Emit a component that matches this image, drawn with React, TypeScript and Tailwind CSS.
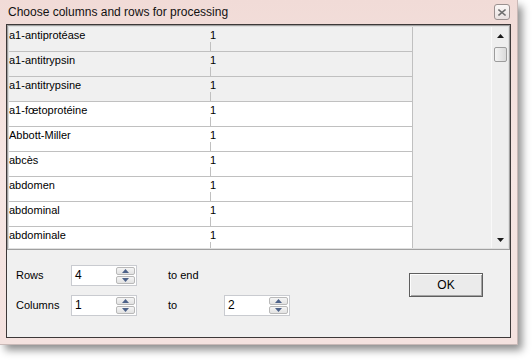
import React from "react";

const terms = [
  "a1-antiprotéase",
  "a1-antitrypsin",
  "a1-antitrypsine",
  "a1-fœtoprotéine",
  "Abbott-Miller",
  "abcès",
  "abdomen",
  "abdominal",
  "abdominale",
];

function Arrow({ up, color }: { up?: boolean; color: string }) {
  return (
    <svg width="7" height="4" viewBox="0 0 7 4">
      <path d={up ? "M0 4 L3.5 0 L7 4 Z" : "M0 0 L7 0 L3.5 4 Z"} fill={color} />
    </svg>
  );
}

function SpinButton({ up }: { up?: boolean }) {
  return (
    <div className="flex flex-1 items-center justify-center rounded-[2px] border border-[#b9b9b9] bg-gradient-to-b from-[#f5f5f5] to-[#e2e2e2]">
      <Arrow up={up} color="#4d6289" />
    </div>
  );
}

function SpinBox({ value }: { value: string }) {
  return (
    <div className="flex h-[21px] w-[66px] border border-[#c9cbd0] bg-white">
      <div className="flex-1 pl-[3px] text-[12px] leading-[19px] text-black">
        {value}
      </div>
      <div className="mr-px flex w-[19px] flex-col gap-px py-px">
        <SpinButton up />
        <SpinButton />
      </div>
    </div>
  );
}

function ScrollBar() {
  return (
    <div className="flex w-[17px] flex-col border-l border-[#f9f9f9] bg-[#eeeeee]">
      <div className="flex h-[17px] items-center justify-center">
        <Arrow up color="#1a1a1a" />
      </div>
      <div className="mx-auto mt-[3px] h-[15px] w-[13px] rounded-[2px] border border-[#9c9c9c] bg-gradient-to-r from-[#f4f4f4] to-[#dadada]" />
      <div className="flex-1" />
      <div className="flex h-[17px] items-center justify-center">
        <Arrow color="#1a1a1a" />
      </div>
    </div>
  );
}

function CloseButton() {
  return (
    <div className="flex h-[16px] w-[16px] items-center justify-center rounded-[3px] border border-[#9a908f] bg-gradient-to-b from-[#fbf7f6] to-[#e9e1e0]">
      <svg width="8" height="7" viewBox="0 0 8 7">
        <path
          d="M1 1 L7 6 M7 1 L1 6"
          stroke="#6e6e6e"
          strokeWidth="1.6"
          strokeLinecap="square"
        />
      </svg>
    </div>
  );
}

export default function App() {
  return (
    <div
      className="h-[361px] w-[532px] overflow-hidden bg-white"
      style={{ fontFamily: '"Liberation Sans", Arial, sans-serif' }}
    >
      <div className="flex h-[344px] w-[517px] flex-col bg-gradient-to-b from-[#f1dbd7] via-[#f6e6e3] to-[#f4e2df] px-[6px] pb-[6px] shadow-[5px_6px_8px_rgba(0,0,0,0.45)] ring-1 ring-[#c9b9b7]">
        <div className="flex h-[24px] items-center justify-between pl-[2px] pr-[1px]">
          <span className="text-[12px] text-[#111]">
            Choose columns and rows for processing
          </span>
          <CloseButton />
        </div>

        <div className="flex flex-1 flex-col border border-[#3d3838] bg-[#f0f0f0]">
          <div className="flex h-[225px] border border-[#a0a0a0]">
            <div className="flex flex-1 overflow-hidden border border-[#e0e0e0] border-l-[#dadada]">
              <div className="w-[404px] border-r border-[#c0c0c0]">
                {terms.map((term, i) => (
                  <div
                    key={term}
                    className={`flex h-[25px] border-b border-[#c0c0c0] text-[11px] text-black ${
                      i < 3 ? "bg-[#f0f0f0]" : "bg-white"
                    }`}
                  >
                    <div className="w-[201px] leading-[16px]">{term}</div>
                    <div className="flex flex-1 flex-col">
                      <div className="h-[15px] leading-[16px]">1</div>
                      <div className="flex-1 border-l border-[#c0c0c0]" />
                    </div>
                  </div>
                ))}
              </div>
              <div className="flex-1 bg-[#f0f0f0]" />
              <ScrollBar />
            </div>
          </div>

          <div className="flex flex-1 text-[11px] text-black">
            <div className="flex flex-1 flex-col gap-[9px] pl-[9px] pt-[15px]">
              <div className="flex items-center">
                <span className="w-[55px]">Rows</span>
                <SpinBox value="4" />
                <span className="ml-[31px]">to end</span>
              </div>
              <div className="flex items-center">
                <span className="w-[55px]">Columns</span>
                <SpinBox value="1" />
                <span className="ml-[31px] w-[56px]">to</span>
                <SpinBox value="2" />
              </div>
            </div>
            <button className="mr-[27px] mt-[23px] flex h-[24px] w-[74px] items-center justify-center border border-[#5e5e5e] bg-[#ebebeb] text-[12px] text-black shadow-[inset_1px_1px_0_#fdfdfd,inset_-1px_-1px_0_#a3a3a3]">
              OK
            </button>
          </div>
        </div>
      </div>
    </div>
  );
}
